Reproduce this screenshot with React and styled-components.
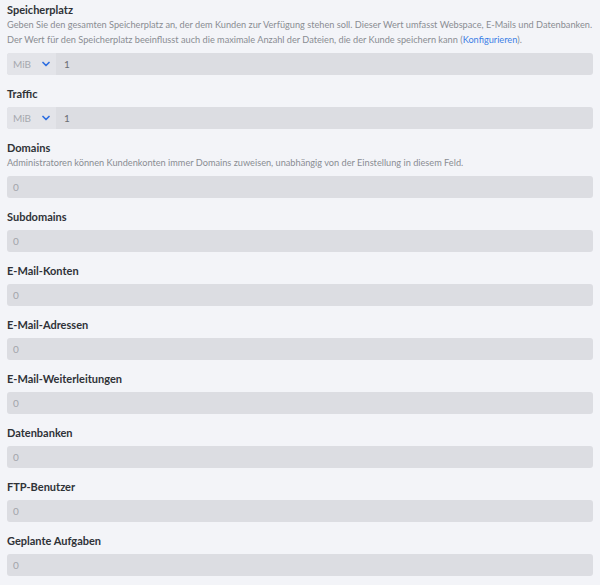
import React from "react";
import styled, { createGlobalStyle } from "styled-components";

const Global = createGlobalStyle`
  html, body { margin: 0; padding: 0; background: #f3f4f8; }
  body { font-family: "Lato", "Noto Sans", sans-serif; }
`;

const Page = styled.div`
  padding: 2px 7px 0 7px;
  display: flex;
  flex-direction: column;
`;

const Field = styled.div`
  display: flex;
  flex-direction: column;
  margin-bottom: 11px;
`;

const Label = styled.div`
  font-size: 11px;
  font-weight: 700;
  color: #2f3237;
  line-height: 15px;
`;

const Desc = styled.div`
  font-size: 9.2px;
  color: #8a8d93;
  line-height: 15px;
  white-space: nowrap;
`;

const Link = styled.a`
  color: #3d7fe6;
  text-decoration: none;
`;

const InputRow = styled.div`
  margin-top: 6px;
  display: flex;
  height: 22px;
  border-radius: 3px;
  background: #dcdde2;
  overflow: hidden;
`;

const UnitSelect = styled.div`
  width: 49px;
  display: flex;
  align-items: center;
  gap: 11px;
  padding-left: 6px;
  background: #e3e4e9;
  color: #a6a8ae;
  font-size: 10px;
  box-sizing: border-box;
`;

const Value = styled.div`
  flex: 1;
  display: flex;
  align-items: center;
  padding-left: ${(p) => (p.$withUnit ? 8 : 6)}px;
  font-size: 10px;
  color: ${(p) => (p.$withUnit ? "#6a6d73" : "#a2a4aa")};
`;

const Chevron = () => (
  <svg width="8" height="6" viewBox="0 0 8 6">
    <path d="M1 1.5l3 3 3-3" fill="none" stroke="#2f6fe0" strokeWidth="1.7" strokeLinecap="round" strokeLinejoin="round" />
  </svg>
);

const plain = [
  "Subdomains",
  "E-Mail-Konten",
  "E-Mail-Adressen",
  "E-Mail-Weiterleitungen",
  "Datenbanken",
  "FTP-Benutzer",
  "Geplante Aufgaben",
];

export default function App() {
  return (
    <>
      <Global />
      <Page>
        <Field>
          <Label>Speicherplatz</Label>
          <Desc>
            Geben Sie den gesamten Speicherplatz an, der dem Kunden zur Verfügung stehen soll. Dieser Wert umfasst Webspace, E-Mails und Datenbanken.
            <br />
            Der Wert für den Speicherplatz beeinflusst auch die maximale Anzahl der Dateien, die der Kunde speichern kann (<Link href="#">Konfigurieren</Link>).
          </Desc>
          <InputRow>
            <UnitSelect>MiB <Chevron /></UnitSelect>
            <Value $withUnit>1</Value>
          </InputRow>
        </Field>
        <Field>
          <Label>Traffic</Label>
          <InputRow>
            <UnitSelect>MiB <Chevron /></UnitSelect>
            <Value $withUnit>1</Value>
          </InputRow>
        </Field>
        <Field>
          <Label>Domains</Label>
          <Desc>Administratoren können Kundenkonten immer Domains zuweisen, unabhängig von der Einstellung in diesem Feld.</Desc>
          <InputRow>
            <Value>0</Value>
          </InputRow>
        </Field>
        {plain.map((l) => (
          <Field key={l}>
            <Label>{l}</Label>
            <InputRow>
              <Value>0</Value>
            </InputRow>
          </Field>
        ))}
      </Page>
    </>
  );
}
